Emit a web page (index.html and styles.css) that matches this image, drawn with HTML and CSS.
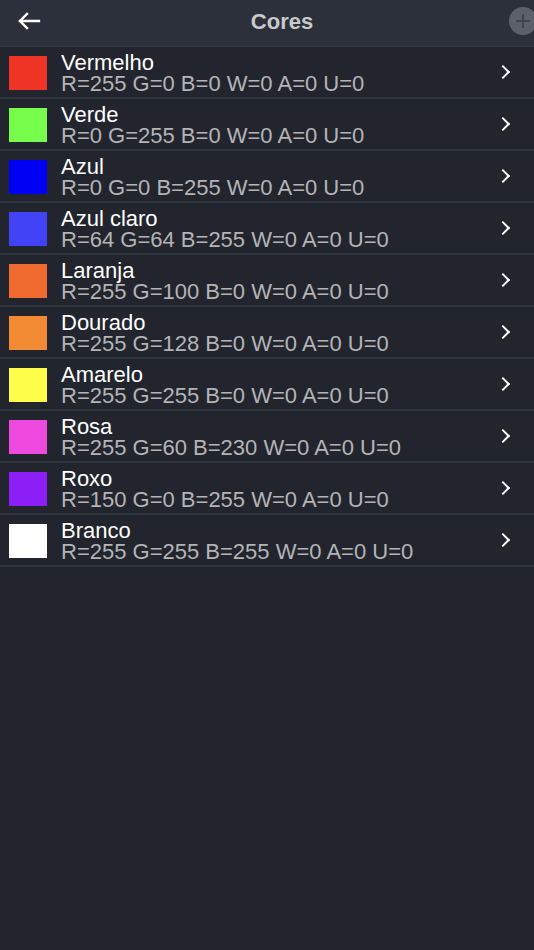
FILE: index.html
```html
<!DOCTYPE html>
<html>
<head>
<meta charset="utf-8">
<link rel="stylesheet" href="styles.css">
</head>
<body>
<div class="app">
  <header class="bar">
    <svg class="back" width="24" height="18" viewBox="0 0 24 18"><path d="M22 9H3M10 2L3 9l7 7" fill="none" stroke="#fff" stroke-width="2.4" stroke-linecap="square"/></svg>
    <div class="title">Cores</div>
    <div class="add"><svg width="16" height="16" viewBox="0 0 16 16"><path d="M8 1v14M1 8h14" stroke="#3a3e47" stroke-width="1.6"/></svg></div>
  </header>
  <ul class="list">
    <li class="row"><span class="sw" style="background:#ee3424"></span><div class="txt"><div class="name">Vermelho</div><div class="val">R=255 G=0 B=0 W=0 A=0 U=0</div></div><span class="chev"></span></li>
    <li class="row"><span class="sw" style="background:#77fd4c"></span><div class="txt"><div class="name">Verde</div><div class="val">R=0 G=255 B=0 W=0 A=0 U=0</div></div><span class="chev"></span></li>
    <li class="row"><span class="sw" style="background:#0000f5"></span><div class="txt"><div class="name">Azul</div><div class="val">R=0 G=0 B=255 W=0 A=0 U=0</div></div><span class="chev"></span></li>
    <li class="row"><span class="sw" style="background:#4242f6"></span><div class="txt"><div class="name">Azul claro</div><div class="val">R=64 G=64 B=255 W=0 A=0 U=0</div></div><span class="chev"></span></li>
    <li class="row"><span class="sw" style="background:#ef6b2e"></span><div class="txt"><div class="name">Laranja</div><div class="val">R=255 G=100 B=0 W=0 A=0 U=0</div></div><span class="chev"></span></li>
    <li class="row"><span class="sw" style="background:#f18a33"></span><div class="txt"><div class="name">Dourado</div><div class="val">R=255 G=128 B=0 W=0 A=0 U=0</div></div><span class="chev"></span></li>
    <li class="row"><span class="sw" style="background:#fefe4a"></span><div class="txt"><div class="name">Amarelo</div><div class="val">R=255 G=255 B=0 W=0 A=0 U=0</div></div><span class="chev"></span></li>
    <li class="row"><span class="sw" style="background:#ee4ae0"></span><div class="txt"><div class="name">Rosa</div><div class="val">R=255 G=60 B=230 W=0 A=0 U=0</div></div><span class="chev"></span></li>
    <li class="row"><span class="sw" style="background:#8b1ff5"></span><div class="txt"><div class="name">Roxo</div><div class="val">R=150 G=0 B=255 W=0 A=0 U=0</div></div><span class="chev"></span></li>
    <li class="row"><span class="sw" style="background:#ffffff"></span><div class="txt"><div class="name">Branco</div><div class="val">R=255 G=255 B=255 W=0 A=0 U=0</div></div><span class="chev"></span></li>
  </ul>
</div>
</body>
</html>
```
FILE: styles.css
```css
html, body { margin: 0; padding: 0; }
body {
  background: #22252e;
  font-family: "Liberation Sans", Arial, sans-serif;
  width: 534px;
  height: 950px;
  overflow: hidden;
}
.app { display: flex; flex-direction: column; }
.bar {
  height: 46px;
  background: #2b303b;
  border-bottom: 1px solid #363a44;
  display: flex;
  align-items: center;
  position: relative;
  overflow: hidden;
}
.back { margin-left: 17px; margin-top: -4px; }
.title {
  position: absolute;
  left: 0; right: 0;
  top: 1px; height: 42px;
  line-height: 42px;
  text-align: center;
  padding-left: 30px;
  color: #c9c9cb;
  font-weight: bold;
  font-size: 22px;
  pointer-events: none;
}
.add {
  position: absolute;
  right: -3px;
  top: 7px;
  width: 28px; height: 28px;
  border-radius: 50%;
  background: #5c606a;
  display: flex; align-items: center; justify-content: center;
}
.list { list-style: none; margin: 0; padding: 0; }
.row {
  height: 50px;
  border-bottom: 2px solid #30343e;
  display: flex;
  align-items: center;
}
.sw {
  width: 38px; height: 34px;
  margin-left: 9px;
  margin-right: 14px;
  margin-top: 1px;
  flex: none;
}
.txt { flex: 1; display: flex; flex-direction: column; margin-top: 3px; }
.name { color: #ffffff; font-size: 22px; line-height: 20px; }
.val { color: #b4b4b6; font-size: 22px; line-height: 21px; }
.chev {
  width: 8px; height: 8px;
  border-top: 2.6px solid #fff;
  border-right: 2.6px solid #fff;
  transform: rotate(45deg);
  margin-right: 26px;
  flex: none;
}
```
